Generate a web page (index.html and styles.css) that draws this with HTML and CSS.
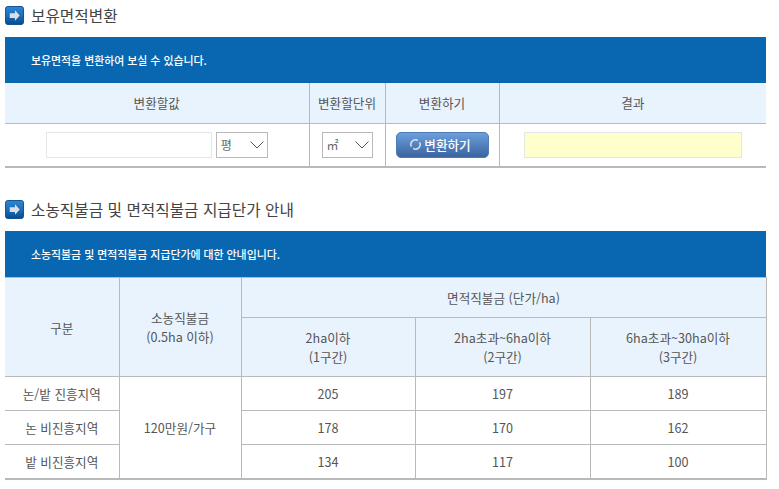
FILE: index.html
```html
<!DOCTYPE html>
<html lang="ko">
<head>
<meta charset="utf-8">
<title>보유면적변환</title>
<link rel="stylesheet" href="styles.css">
</head>
<body>
<section class="block first">
  <h2 class="heading"><svg class="bullet" viewBox="0 0 20 20"><defs><linearGradient id="g1" x1="0" y1="0" x2="0" y2="1"><stop offset="0" stop-color="#2f86cf"/><stop offset="0.5" stop-color="#1a6fbb"/><stop offset="1" stop-color="#0b4a8c"/></linearGradient></defs><rect x="0.5" y="0.5" width="19" height="19" rx="2.5" fill="url(#g1)" stroke="#0c4f92"/><path d="M5 7.5h5.5V4.5l5 5.5-5 5.5v-3H5z" fill="#d9dfe6"/></svg>보유면적변환</h2>
  <p class="banner">보유면적을 변환하여 보실 수 있습니다.</p>
  <table class="grid convert">
    <colgroup><col class="c1"><col class="c2"><col class="c3"><col class="c4"></colgroup>
    <thead><tr><th>변환할값</th><th>변환할단위</th><th>변환하기</th><th>결과</th></tr></thead>
    <tbody><tr>
      <td><div class="inputs"><input class="field value" type="text"><span class="select wide">평<svg class="chev" viewBox="0 0 14 8"><path d="M0.5 0.5l6.5 6.5 6.5-6.5" fill="none" stroke="#555" stroke-width="1"/></svg></span></div></td>
      <td><div class="inputs"><span class="select narrow">㎡<svg class="chev" viewBox="0 0 14 8"><path d="M0.5 0.5l6.5 6.5 6.5-6.5" fill="none" stroke="#555" stroke-width="1"/></svg></span></div></td>
      <td><div class="inputs"><button class="btn" type="button"><svg class="spin" viewBox="0 0 12 12"><path d="M8.6 1.7A5 5 0 0 0 1.6 8.4M3.4 10.3A5 5 0 0 0 10.4 3.6" fill="none" stroke="#d5e0ee" stroke-width="1.7"/></svg>변환하기</button></div></td>
      <td><div class="inputs"><input class="field result" type="text"></div></td>
    </tr></tbody>
  </table>
</section>
<section class="block second">
  <h2 class="heading"><svg class="bullet" viewBox="0 0 20 20"><defs><linearGradient id="g2" x1="0" y1="0" x2="0" y2="1"><stop offset="0" stop-color="#2f86cf"/><stop offset="0.5" stop-color="#1a6fbb"/><stop offset="1" stop-color="#0b4a8c"/></linearGradient></defs><rect x="0.5" y="0.5" width="19" height="19" rx="2.5" fill="url(#g2)" stroke="#0c4f92"/><path d="M5 7.5h5.5V4.5l5 5.5-5 5.5v-3H5z" fill="#d9dfe6"/></svg>소농직불금 및 면적직불금 지급단가 안내</h2>
  <p class="banner">소농직불금 및 면적직불금 지급단가에 대한 안내입니다.</p>
  <table class="grid rates">
    <colgroup><col class="r1"><col class="r2"><col class="r3"><col class="r4"><col class="r5"></colgroup>
    <thead>
      <tr class="h1"><th rowspan="2">구분</th><th rowspan="2">소농직불금<br>(0.5ha 이하)</th><th colspan="3">면적직불금 (단가/ha)</th></tr>
      <tr class="h2"><th>2ha이하<br>(1구간)</th><th>2ha초과~6ha이하<br>(2구간)</th><th>6ha초과~30ha이하<br>(3구간)</th></tr>
    </thead>
    <tbody>
      <tr><td>논/밭 진흥지역</td><td rowspan="3">120만원/가구</td><td>205</td><td>197</td><td>189</td></tr>
      <tr><td>논 비진흥지역</td><td>178</td><td>170</td><td>162</td></tr>
      <tr class="last"><td>밭 비진흥지역</td><td>134</td><td>117</td><td>100</td></tr>
    </tbody>
  </table>
</section>
</body>
</html>
```
FILE: styles.css
```css
* { box-sizing: border-box; }
html, body { margin: 0; padding: 0; background: #fff; }
body {
  padding: 0 13px 0 5px;
  font-family: "Noto Sans CJK KR", "Noto Sans", sans-serif;
  font-size: 12.6px;
  color: #555;
}
.block.first { padding-top: 6px; }
.block.second { padding-top: 32px; }
.heading {
  display: flex;
  align-items: center;
  gap: 7px;
  margin: 0 0 12px;
  height: 19px;
  font-size: 15.7px;
  font-weight: 400;
  color: #444;
  line-height: 19px;
}
.bullet { width: 19px; height: 19px; flex: none; }
.banner {
  margin: 0;
  height: 46px;
  padding-left: 26px;
  background: #0867b0;
  color: #fff;
  font-size: 10.9px;
  font-weight: 500;
  line-height: 46px;
}
.grid {
  width: 761px;
  border-collapse: collapse;
  table-layout: fixed;
}
.grid th, .grid td {
  padding: 0;
  text-align: center;
  vertical-align: middle;
  border: 1px solid #b9b9b9;
  font-weight: 400;
  line-height: 19px;
}
.grid th { background: #e8f3fd; }
.grid tr > :first-child { border-left: 0; }
.convert thead tr:first-child th { border-top: 0; }
.rates thead tr:first-child th { border-top: 1px solid #b9b9b9; }
.grid tbody tr:last-child td, .grid tbody td[rowspan] { border-bottom: 2px solid #b9b9b9; }
.convert tr > :last-child { border-right: 0; }
.c1 { width: 304px; }
.c2 { width: 76px; }
.c3 { width: 114px; }
.c4 { width: 267px; }
.convert th { height: 40px; }
.convert td { height: 44px; }
.inputs {
  display: flex;
  justify-content: center;
  align-items: center;
  gap: 4px;
}
.field {
  height: 26px;
  border: 1px solid #e6e6e6;
  background: #fff;
  padding: 0;
  outline: 0;
}
.value { width: 166px; }
.result { width: 218px; background: #ffffcc; }
.select {
  display: flex;
  justify-content: space-between;
  align-items: center;
  height: 26px;
  border: 1px solid #b9b9b9;
  padding: 0 3px 0 4px;
  color: #666;
  font-size: 12px;
}
.wide { width: 52px; }
.narrow { width: 51px; }
.chev { width: 14px; height: 8px; flex: none; }
.btn {
  display: flex;
  align-items: center;
  justify-content: center;
  gap: 3px;
  width: 93px;
  height: 26px;
  padding: 0 3px 0 0;
  border: 1px solid #4f7cb4;
  border-radius: 5px;
  background: linear-gradient(#6c9edd, #3a659f);
  color: #fff;
  font-family: inherit;
  font-size: 12.6px;
  font-weight: 500;
}
.spin { width: 11px; height: 11px; flex: none; }
.r1 { width: 114px; }
.r2 { width: 122px; }
.r3 { width: 174px; }
.r4 { width: 175px; }
.r5 { width: 176px; }
.rates .h1 th { height: 40px; }
.rates .h2 th { height: 59px; }
.rates td { height: 34px; }
```
